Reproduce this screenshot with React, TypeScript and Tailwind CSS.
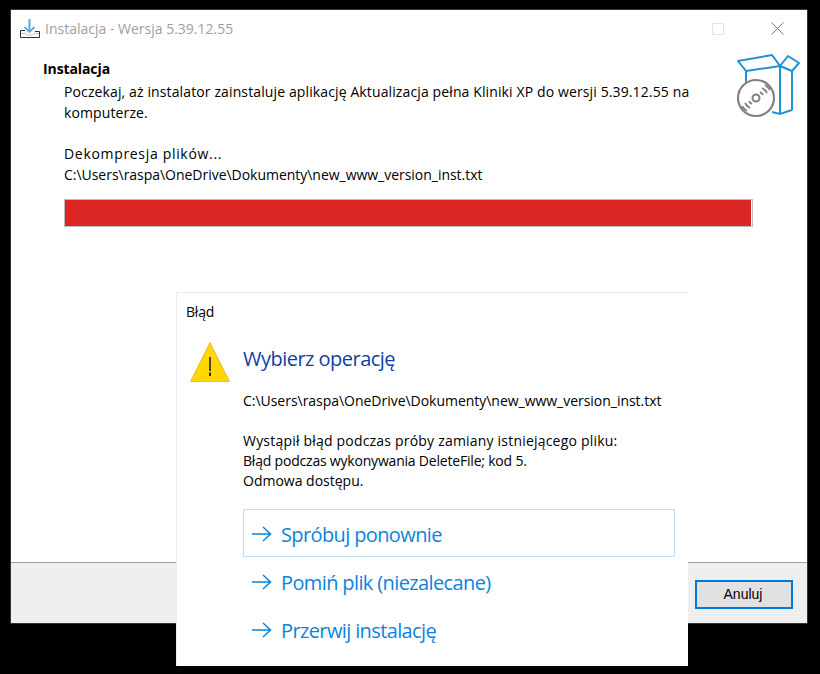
const font = "[font-family:'Open_Sans','Noto_Sans',sans-serif]";

function InstallIcon() {
  return (
    <svg width="20" height="20" viewBox="0 0 20 20" fill="none" className="shrink-0">
      <path d="M9.500 0v13" stroke="#5aa7e0" strokeWidth="2" />
      <path d="M4.500 8l5 5 5-5" stroke="#5aa7e0" strokeWidth="1.800" />
      <path d="M5 11.500H.500v7h19v-6h-4.500" stroke="#333" strokeWidth="1" />
      <path d="M1 14.500h4.500l1.500 1.500h5.500l1.500-1.500h5" stroke="#b8c4cc" strokeWidth="1" />
    </svg>
  );
}

function BoxIcon() {
  return (
    <svg width="66" height="64" viewBox="0 0 66 64" fill="none">
      <path d="M2 7L36 1L44 12L10 17Z" stroke="#2291d4" strokeWidth="2" strokeLinejoin="round" />
      <path d="M44 12L52 2L63 9L56 17Z" stroke="#2291d4" strokeWidth="2" strokeLinejoin="round" />
      <path d="M10 17V30M44 12V60M56 17V56M36 58L44 60L56 56" stroke="#2291d4" strokeWidth="2" />
      <circle cx="20" cy="44" r="18" fill="white" stroke="#808080" strokeWidth="2.200" />
      <circle cx="20" cy="44" r="3.500" stroke="#808080" strokeWidth="2" />
      <path d="M24 38a8 8 0 0 1 3 3M26 34a12 12 0 0 1 5 5M29 31a16 16 0 0 1 5 5M16 50a8 8 0 0 1-3-3M14 54a12 12 0 0 1-5-5M11 57a16 16 0 0 1-5-5" stroke="#808080" strokeWidth="1.800" />
    </svg>
  );
}

function Arrow() {
  return (
    <svg width="20" height="16" viewBox="0 0 20 16" fill="none" className="mt-[1px] shrink-0">
      <path d="M0 8h18.500M11 1l7.500 7-7.500 7" stroke="#0a84e0" strokeWidth="1.500" />
    </svg>
  );
}

function Warning() {
  return (
    <svg width="42" height="42" viewBox="0 0 42 42" className="shrink-0">
      <path d="M21 1.500L40.500 40.500H1.500Z" fill="#ffd800" stroke="#f0b93a" strokeWidth="1" />
      <path d="M21 16v14" stroke="#222" strokeWidth="1.600" />
      <path d="M21 31.500v3.500" stroke="#111" strokeWidth="1.800" />
    </svg>
  );
}

function Option({ label, active }: { label: string; active?: boolean }) {
  return (
    <div
      className={`flex h-[48px] items-center gap-[9px] border pl-[8px] text-[20px] text-[#0a84e0] ${
        active ? "border-[#bfdff5]" : "border-transparent"
      }`}
    >
      <Arrow />
      <span className="pt-[4px] tracking-[-0.62px]">{label}</span>
    </div>
  );
}

export default function App() {
  return (
    <div className={`relative h-[674px] w-[820px] overflow-hidden bg-black pl-[10px] pt-[9px] ${font}`}>
      {/* Installer window */}
      <div className="flex h-[615px] w-[798px] flex-col border border-[#333] bg-white text-[14px] text-black">
        <div className="flex h-[37px] items-center pl-[9px] pr-[23px]">
          <InstallIcon />
          <span className="ml-[5px] text-[14px] text-[#a0a0a0]">Instalacja - Wersja 5.39.12.55</span>
          <div className="ml-auto flex items-center gap-[47px]">
            <div className="h-[12px] w-[12px] border border-[#e4e4e4]" />
            <svg width="13" height="13" viewBox="0 0 13 13" fill="none">
              <path d="M.500 .500l12 12M12.500 .500l-12 12" stroke="#777" strokeWidth="1" />
            </svg>
          </div>
        </div>

        <div className="relative flex-1 pl-[32px] pt-[12px]">
          <div className="absolute right-[5px] top-[7px]">
            <BoxIcon />
          </div>
          <div className="text-[14px] font-bold leading-[19px] tracking-[-0.1px]">Instalacja</div>
          <div className="pl-[21px] pt-[3px] leading-[21px]">
            <p className="w-[660px] tracking-[0.12px]">
              Poczekaj, aż instalator zainstaluje aplikację Aktualizacja pełna Kliniki XP do wersji 5.39.12.55 na komputerze.
            </p>
            <p className="mt-[20px] tracking-[0.68px]">Dekompresja plików...</p>
            <p className="whitespace-nowrap tracking-[-0.03px]">C:\Users\raspa\OneDrive\Dokumenty\new_www_version_inst.txt</p>
            <div className="mt-[14px] h-[28px] w-[689px] border border-[#bcbcbc] bg-white pr-px">
              <div className="h-full bg-[#dc2626]" />
            </div>
          </div>
        </div>

        <div className="flex h-[61px] items-center justify-end border-t border-[#a0a0a0] bg-[#efefef] pr-[14px] pt-[3px]">
          <button className="h-[29px] w-[98px] border-2 border-[#0078d7] bg-[#e1e1e1] pr-[2px] font-['Liberation_Sans',sans-serif] text-[14px]">
            Anuluj
          </button>
        </div>
      </div>

      {/* Error dialog */}
      <div className="absolute left-[176px] top-[292px] h-[374px] w-[512px] border-l border-t border-[#ececec] bg-white">
        <div className="pl-[9px] pt-[8px] text-[14px] tracking-[-0.2px] text-black">Błąd</div>
        <div className="flex pl-[12px] pt-[19px]">
          <Warning />
          <div className="ml-[12px] flex-1 pr-[13px]">
            <h1 className="pt-[4px] text-[20px] leading-[27px] tracking-[-0.52px] text-[#0f3fa8]">Wybierz operację</h1>
            <div className="pt-[19px] text-[14px] leading-[20px] text-black">
              <p className="whitespace-nowrap tracking-[-0.03px]">C:\Users\raspa\OneDrive\Dokumenty\new_www_version_inst.txt</p>
              <p className="mt-[20px] tracking-[0.2px]">Wystąpił błąd podczas próby zamiany istniejącego pliku:</p>
              <p className="tracking-[-0.2px]">Błąd podczas wykonywania DeleteFile; kod 5.</p>
              <p>Odmowa dostępu.</p>
            </div>
            <div className="mt-[18px] flex flex-col">
              <Option label="Spróbuj ponownie" active />
              <Option label="Pomiń plik (niezalecane)" />
              <Option label="Przerwij instalację" />
            </div>
          </div>
        </div>
      </div>
    </div>
  );
}
